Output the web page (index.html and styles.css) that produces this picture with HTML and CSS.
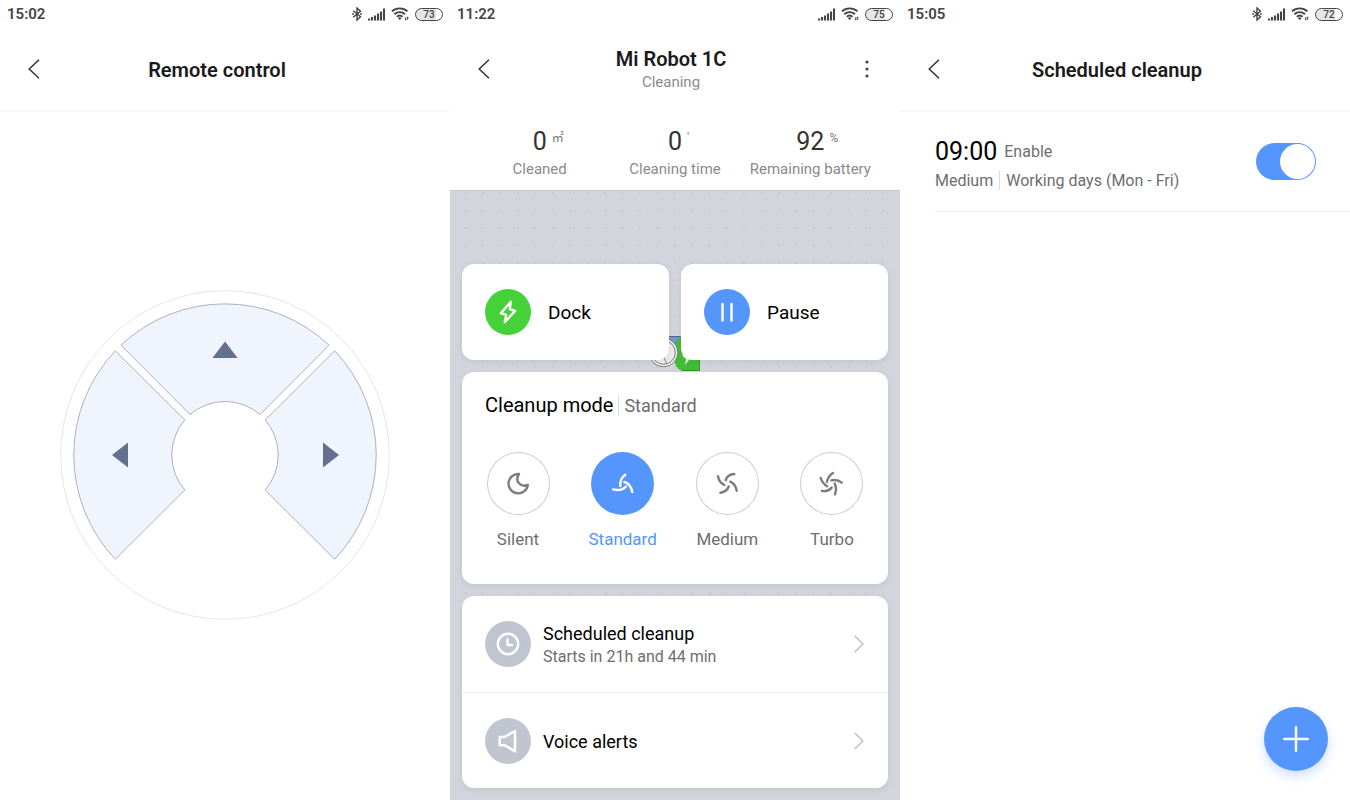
FILE: index.html
```html
<!DOCTYPE html>
<html lang="en">
<head>
    <meta charset="UTF-8">
    <meta name="viewport" content="width=device-width, initial-scale=1.0">
    <title>Mi Robot 1C</title>
    <link rel="stylesheet" href="styles.css">
</head>
<body>
<svg class="sprite" aria-hidden="true">
    <symbol id="i-bluetooth" viewBox="0 0 10 14">
        <path d="M1.2 3.8 8.5 9.8 5 13V1L8.5 4.2 1.2 10.2" fill="none" stroke="#444" stroke-width="1.4"/>
        <circle cx="1" cy="7" r=".9" fill="#444"/>
        <circle cx="9" cy="7" r=".9" fill="#444"/>
    </symbol>
    <symbol id="i-signal" viewBox="0 0 17 13">
        <path d="M1 12.5v-2M4 12.5V9M7 12.5v-5M10 12.5v-7M13 12.5v-9M16 12.5V.5" fill="none" stroke="#444" stroke-width="2.1"/>
    </symbol>
    <symbol id="i-wifi" viewBox="0 0 18 14">
        <path d="M1 4.4a11.2 11.2 0 0 1 15.4 0M3.4 7.2a7.8 7.8 0 0 1 10.6 0M5.8 9.8a4.4 4.4 0 0 1 5.8 0" fill="none" stroke="#444" stroke-width="1.9"/>
        <path d="M6.9 11.2a2.6 2.6 0 0 1 3.6 0l-1.8 1.9z" fill="#444"/>
        <path d="M14.7 10v3.4M16.6 9.6V13M13.8 12.2h2M15.6 10.8h2" stroke="#444" stroke-width=".8"/>
    </symbol>
    <symbol id="i-back" viewBox="0 0 12 20">
        <path d="M11 .8 1.2 10 11 19.2" fill="none" stroke="#333" stroke-width="1.5"/>
    </symbol>
    <symbol id="i-next" viewBox="0 0 10 18">
        <path d="M.8 1 9 9 .8 17" fill="none" stroke="#bbb" stroke-width="1.3"/>
    </symbol>
</svg>

<main class="screens">
    <!-- Remote control -->
    <section class="screen">
        <div class="status">
            <span class="clock">15:02</span>
            <svg class="icon-bt"><use href="#i-bluetooth"/></svg>
            <svg class="icon-signal"><use href="#i-signal"/></svg>
            <svg class="icon-wifi"><use href="#i-wifi"/></svg>
            <span class="battery">73</span>
        </div>
        <header class="topbar topbar-line">
            <button class="back" aria-label="Back"><svg><use href="#i-back"/></svg></button>
            <h1>Remote control</h1>
        </header>
        <div class="remote">
            <div class="pad">
                <svg class="pad-shape" viewBox="0 0 330 330">
                    <circle cx="165" cy="165" r="164.3" fill="#fff" stroke="#e6e6e6"/>
                    <g fill="#f0f5fd" stroke="#abb1bd">
                        <path d="M61 55.2A151.5 151.5 0 0 1 269 55.2L200 124.5A53.5 53.5 0 0 0 130 124.5Z"/>
                        <path d="M55.3 60.8A151.5 151.5 0 0 0 55.3 269.2L124.8 200A53.5 53.5 0 0 1 124.8 130Z"/>
                        <path d="M274.7 60.8A151.5 151.5 0 0 1 274.7 269.2L205.2 200A53.5 53.5 0 0 0 205.2 130Z"/>
                    </g>
                </svg>
                <button class="pad-btn forward" aria-label="Forward"><svg viewBox="0 0 26 26"><path d="M13 4.5 25.6 21H.4z"/></svg></button>
                <button class="pad-btn left" aria-label="Turn left"><svg viewBox="0 0 26 26"><path d="M5 13 21 .4v25.2z"/></svg></button>
                <button class="pad-btn right" aria-label="Turn right"><svg viewBox="0 0 26 26"><path d="M22 13 6 .4v25.2z"/></svg></button>
            </div>
        </div>
    </section>

    <!-- Robot -->
    <section class="screen">
        <div class="status">
            <span class="clock">11:22</span>
            <svg class="icon-signal"><use href="#i-signal"/></svg>
            <svg class="icon-wifi"><use href="#i-wifi"/></svg>
            <span class="battery">75</span>
        </div>
        <header class="topbar topbar-menu">
            <button class="back" aria-label="Back"><svg><use href="#i-back"/></svg></button>
            <div>
                <h1>Mi Robot 1C</h1>
                <p class="state">Cleaning</p>
            </div>
            <button class="more" aria-label="More">
                <svg viewBox="0 0 4 20"><circle cx="2" cy="3" r="1.6"/><circle cx="2" cy="10" r="1.6"/><circle cx="2" cy="17" r="1.6"/></svg>
            </button>
        </header>
        <dl class="stats">
            <div class="stat"><dt>Cleaned</dt><dd>0<span class="unit">㎡</span></dd></div>
            <div class="stat"><dt>Cleaning time</dt><dd>0<span class="unit">'</span></dd></div>
            <div class="stat"><dt>Remaining battery</dt><dd>92<span class="unit">%</span></dd></div>
        </dl>
        <div class="map">
            <svg class="map-canvas" aria-hidden="true">
                <defs>
                    <pattern id="dots" x="7" y="-6.5" width="17.4" height="17.4" patternUnits="userSpaceOnUse">
                        <circle cx="8.7" cy="8.7" r="1" fill="#c3c7cd"/>
                    </pattern>
                </defs>
                <rect width="100%" height="100%" fill="url(#dots)"/>
                <rect x="211" y="145" width="20" height="24" fill="#7296d6"/>
                <path d="M211 145.5h20" stroke="#59657c"/>
                <path d="M236 145h14v35h-18q-8-3-8-14v-11q3-10 12-10z" fill="#40bd36"/>
                <path d="M249.5 145v34.5H232" fill="none" stroke="#2f9a29"/>
                <path d="M231 164l4 1 1-5 2 5h4l-7 9 1-6z" fill="#e7f7e5"/>
                <circle cx="213.5" cy="161.5" r="14.3" fill="#f4f4f4" stroke="#777"/>
                <circle cx="213.5" cy="161.5" r="11.8" fill="#ededed" stroke="#777"/>
                <path d="M213.5 166l3 6" stroke="#888"/>
            </svg>
            <div class="actions">
                <button class="card action">
                    <svg class="round green" viewBox="0 0 46 46"><path d="M25.8 12.8 15.8 24.2l5.4 1.6-1.5 7.4L30.2 21.8l-5.4-1.6z"/></svg>
                    Dock
                </button>
                <button class="card action">
                    <svg class="round blue" viewBox="0 0 46 46"><path d="M18.5 15v16.5M27.5 15v16.5"/></svg>
                    Pause
                </button>
            </div>
            <div class="card modes">
                <h2>Cleanup mode <span class="current">Standard</span></h2>
                <div class="mode-list">
                    <button class="mode">
                        <svg viewBox="0 0 63 63"><path d="M32 22A9.7 9.7 0 1 0 40.8 33C34 35.5 27 29.5 32 22z"/></svg>
                        Silent
                    </button>
                    <button class="mode active" aria-pressed="true">
                        <svg viewBox="0 0 63 63"><path d="M34.3 22.7Q28.4 27 29.4 34M33.3 30Q39.5 31.5 41.3 40M22.3 37.3Q30.5 39.5 35 34.5"/></svg>
                        Standard
                    </button>
                    <button class="mode">
                        <svg viewBox="0 0 63 63"><path d="M38.3 22Q31.5 22.3 29.7 28.2M34.3 29.7Q39.3 31.7 40.7 38.7M24.3 40.7Q30.7 40 32.7 34.5M22 24.3Q23 30.5 28.3 33"/></svg>
                        Medium
                    </button>
                    <button class="mode">
                        <svg viewBox="0 0 63 63"><path d="M33 21Q28 24 27 29.9M31.3 28.3Q37.5 27 41.7 30.7M34.7 31.5Q37 36.5 35 42.3M22 39Q28 39.8 31.7 35.6M20.7 26Q22.3 31.5 27.2 34.2"/></svg>
                        Turbo
                    </button>
                </div>
            </div>
            <nav class="card links">
                <a class="link" href="#schedule">
                    <svg class="round gray" viewBox="0 0 46 46"><circle cx="23" cy="23" r="10.2"/><path d="M22.5 18.5V24H27"/></svg>
                    <span class="link-text">Scheduled cleanup <small>Starts in 21h and 44 min</small></span>
                    <svg class="next"><use href="#i-next"/></svg>
                </a>
                <a class="link" href="#voice">
                    <svg class="round gray" viewBox="0 0 46 46"><path d="M14.7 19h4.8L30 13v20.4l-10.5-6.2h-4.8z"/></svg>
                    <span class="link-text">Voice alerts</span>
                    <svg class="next"><use href="#i-next"/></svg>
                </a>
            </nav>
        </div>
    </section>

    <!-- Scheduled cleanup -->
    <section class="screen" id="schedule">
        <div class="status">
            <span class="clock">15:05</span>
            <svg class="icon-bt"><use href="#i-bluetooth"/></svg>
            <svg class="icon-signal"><use href="#i-signal"/></svg>
            <svg class="icon-wifi"><use href="#i-wifi"/></svg>
            <span class="battery">72</span>
        </div>
        <header class="topbar topbar-line">
            <button class="back" aria-label="Back"><svg><use href="#i-back"/></svg></button>
            <h1>Scheduled cleanup</h1>
        </header>
        <div class="timer">
            <label for="timer-on">
                <span class="timer-top"><span class="time">09:00</span>Enable</span>
                <span class="timer-days">Medium<span class="days">Working days (Mon - Fri)</span></span>
            </label>
            <input type="checkbox" class="switch" id="timer-on" checked>
        </div>
        <button class="add" aria-label="Add schedule">
            <svg viewBox="0 0 26 26"><path d="M13 1.2v23.6M1.2 13h23.6"/></svg>
        </button>
    </section>
</main>
</body>
</html>
```
FILE: styles.css
```css
* {
    margin: 0;
    padding: 0;
    box-sizing: border-box;
}

:root {
    --blue: #5596fc;
    --green: #45d238;
    --gray: #c1c5d0;
    --map: #d2d5db;
    --line: #eee;
    --muted: #6e6e6e;
    --label: #8b8b8b;
}

body {
    color: #000;
    background: #fff;
    font-family: Roboto, "Noto Sans CJK SC", sans-serif;
}

button {
    border: none;
    background: none;
    color: inherit;
    font-family: inherit;
    cursor: pointer;
}

svg {
    display: block;
    flex: none;
}

.sprite {
    position: absolute;
    width: 0;
    height: 0;
}

.screens {
    display: grid;
    grid-template-columns: repeat(3, 1fr);
    min-height: 100vh;
}

.screen {
    display: flex;
    flex-direction: column;
}

/* status bar */
.status {
    display: flex;
    align-items: center;
    gap: 6px;
    height: 28px;
    padding: 0 7px;
    color: #444;
}

.clock {
    margin-right: auto;
    font-size: 15px;
    font-weight: 600;
}

.icon-bt {
    width: 10px;
    height: 14px;
}

.icon-signal {
    width: 17px;
    height: 13px;
}

.icon-wifi {
    width: 18px;
    height: 14px;
}

.battery {
    width: 28px;
    border: 1px solid #444;
    border-radius: 7px;
    background: linear-gradient(90deg, #e6e6e6 75%, #fff 75%);
    font-size: 10px;
    font-weight: 500;
    line-height: 11px;
    text-align: center;
}

/* title bar */
.topbar {
    display: grid;
    grid-template-columns: 48px 1fr 64px;
    align-items: center;
    height: 84px;
    border-bottom: 2px solid transparent;
    text-align: center;
}

.topbar-line {
    border-bottom-color: #f7f7f7;
}

.topbar-menu {
    grid-template-columns: 58px 1fr 66px;
}

.topbar h1 {
    padding-top: 2px;
    color: #1a1a1a;
    font-size: 20px;
    font-weight: 600;
    line-height: 24px;
}

.state {
    color: var(--label);
    font-size: 15px;
    line-height: 22px;
}

.back {
    padding-left: 28px;
}

.back svg {
    width: 12px;
    height: 20px;
}

.more svg {
    width: 4px;
    height: 20px;
    margin: 0 auto;
    fill: #444;
}

/* remote */
.remote {
    flex: 1;
    display: grid;
    place-items: center;
    padding-bottom: 2px;
}

.pad {
    position: relative;
    display: grid;
    grid-template: 120px 90px 120px / 120px 90px 120px;
}

.pad-shape {
    position: absolute;
    inset: 0;
}

.pad-btn {
    position: relative;
    display: grid;
    place-items: center;
}

.pad-btn svg {
    width: 26px;
    height: 26px;
    fill: #63718e;
}

.forward {
    grid-area: 1 / 2;
}

.left {
    grid-area: 2 / 1;
}

.right {
    grid-area: 2 / 3;
}

/* robot */
.stats {
    display: grid;
    grid-template-columns: repeat(3, 1fr);
    height: 78px;
    padding: 15px 22px 0;
    text-align: center;
}

.stat {
    display: flex;
    flex-direction: column-reverse;
    justify-content: flex-end;
}

.stat dt {
    color: var(--label);
    font-size: 15px;
    line-height: 25px;
    white-space: nowrap;
}

.stat dd {
    color: #333;
    font-size: 25px;
    line-height: 30px;
}

.unit {
    position: absolute;
    margin-left: 5px;
    color: #777;
    font-size: 12px;
    line-height: 22px;
}

.map {
    position: relative;
    flex: 1;
    display: flex;
    flex-direction: column;
    gap: 12px;
    padding: 73px 12px 12px;
    background: var(--map);
    border-top: 1px solid #c6c9ce;
}

.map-canvas {
    position: absolute;
    inset: 0;
    width: 100%;
    height: 100%;
}

.card {
    position: relative;
    border-radius: 12px;
    background: #fff;
    box-shadow: 0 2px 6px rgba(60, 70, 90, 0.1);
}

.actions {
    display: grid;
    grid-template-columns: 1fr 1fr;
    gap: 12px;
}

.action {
    display: flex;
    align-items: center;
    gap: 17px;
    height: 96px;
    padding: 0 23px;
    font-size: 19px;
}

.round {
    width: 46px;
    height: 46px;
    border-radius: 50%;
    fill: none;
    stroke: #fff;
    stroke-width: 2.4;
    stroke-linecap: round;
    stroke-linejoin: round;
}

.green {
    background: var(--green);
}

.blue {
    background: var(--blue);
}

.gray {
    background: var(--gray);
}

.modes {
    padding: 19px 16px 33px;
}

.modes h2 {
    padding-left: 7px;
    font-size: 20px;
    font-weight: 400;
    line-height: 28px;
}

.current {
    padding-left: 5px;
    border-left: 1px solid #ddd;
    color: var(--muted);
    font-size: 18px;
}

.mode-list {
    display: flex;
    justify-content: space-between;
    padding-top: 32px;
}

.mode {
    display: flex;
    flex-direction: column;
    align-items: center;
    gap: 12px;
    width: 80px;
    color: var(--muted);
    font-size: 17px;
    line-height: 24px;
}

.mode svg {
    width: 63px;
    height: 63px;
    border-radius: 50%;
    box-shadow: inset 0 0 0 1px #ccc;
    fill: none;
    stroke: #7c7c7c;
    stroke-width: 2.4;
    stroke-linecap: round;
    stroke-linejoin: round;
}

.active {
    color: var(--blue);
}

.active svg {
    background: var(--blue);
    box-shadow: none;
    stroke: #fff;
}

.link {
    display: flex;
    align-items: center;
    gap: 12px;
    height: 96px;
    padding: 0 24px 0 23px;
    color: #000;
    text-decoration: none;
}

.link + .link {
    border-top: 1px solid var(--line);
}

.link-text {
    flex: 1;
    padding-top: 2px;
    font-size: 18px;
    line-height: 23px;
}

.link-text small {
    display: block;
    color: var(--muted);
    font-size: 16px;
}

.next {
    width: 10px;
    height: 18px;
}

/* schedule */
.timer {
    display: flex;
    align-items: center;
    justify-content: space-between;
    height: 100px;
    margin-left: 35px;
    padding-right: 34px;
    border-bottom: 1px solid var(--line);
    color: var(--muted);
    font-size: 16px;
}

.timer label {
    padding-top: 6px;
}

.timer-top {
    display: flex;
    align-items: center;
    gap: 7px;
    line-height: 32px;
}

.time {
    color: #000;
    font-size: 25px;
}

.timer-days {
    display: block;
    line-height: 26px;
}

.days {
    margin-left: 6px;
    padding-left: 6px;
    border-left: 1px solid #ddd;
}

.switch {
    appearance: none;
    display: flex;
    width: 60px;
    height: 37px;
    padding: 1px;
    border-radius: 19px;
    background: #ccc;
    cursor: pointer;
}

.switch::before {
    content: "";
    width: 35px;
    border-radius: 50%;
    background: #fff;
}

.switch:checked {
    justify-content: flex-end;
    background: var(--blue);
}

.add {
    display: grid;
    place-items: center;
    width: 64px;
    height: 64px;
    margin: auto 22px 29px auto;
    border-radius: 50%;
    background: var(--blue);
    box-shadow: 0 5px 12px rgba(85, 150, 252, 0.3);
}

.add svg {
    width: 26px;
    height: 26px;
    stroke: #fff;
    stroke-width: 2.4;
    stroke-linecap: round;
}
```
